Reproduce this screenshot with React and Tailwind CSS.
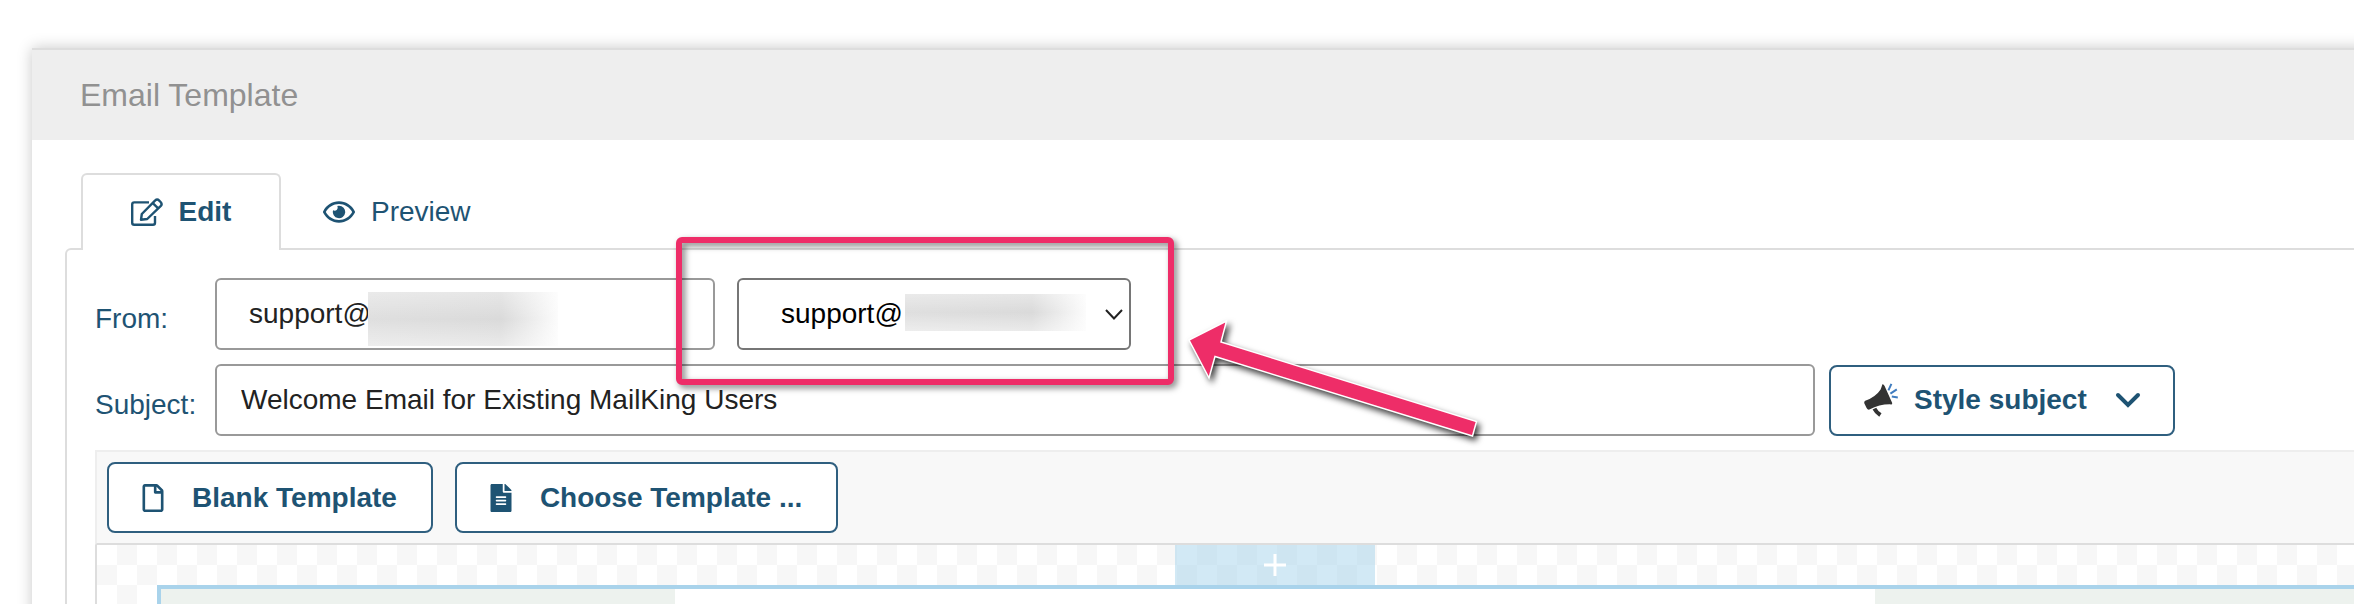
import React from 'react';
import { FaRegEye, FaRegFile, FaFileAlt } from 'react-icons/fa';

const outlineButton =
  'flex h-[71px] items-center rounded-lg border-2 border-[#2f5f7f] bg-white font-bold text-[#1e5373]';

function EditIcon() {
  return (
    <svg width="32" height="28" viewBox="0 0 32 28" fill="none" stroke="#1e5373" strokeWidth="2.4" strokeLinejoin="round">
      <path d="M18 4.4H3.2Q1.2 4.4 1.2 6.4V24.8Q1.2 26.8 3.2 26.8H22Q24 26.8 24 24.8V18" />
      <path d="M10 21.8L10.8 16L24 2.6Q26.2 .6 28.2 2.6L29.6 4Q31.6 6.2 29.6 8.2L16.2 21Z" />
      <path d="M21.8 5.2L27.2 10.4" />
    </svg>
  );
}

function BullhornIcon() {
  return (
    <svg width="34" height="34" viewBox="0 0 34 34">
      <path d="M18.4 1.2Q19.8 1 20.6 3L28 19.6Q28.6 21.2 27.2 21.4Q16 21 5.4 26.6Q3.6 27 2.6 25L.4 20.6Q-.2 18.8 1.2 17.8Q12 13.6 16.6 6.4Q17.8 3.4 18.4 1.2Z" fill="#333" />
      <path d="M10.4 25.6Q12 29 16.4 32" fill="none" stroke="#333" strokeWidth="4" />
      <path d="M24.4 7.4L27.4 .8M26.4 10.6L32.8 6.4M27.8 13.6L33.8 14.4" stroke="#3f7cbf" strokeWidth="2" />
    </svg>
  );
}

/** Tab strip above the editor panel */
function Tabs() {
  return (
    <div className="-mb-0.5 flex pl-4" role="tablist">
      <button
        role="tab"
        aria-selected="true"
        className="relative flex h-[77px] w-[200px] items-center justify-center gap-4 rounded-t-md border-2 border-b-0 border-[#ddd] bg-white pb-0.5 font-bold"
      >
        <EditIcon />
        Edit
      </button>
      <button role="tab" aria-selected="false" className="flex items-center gap-4 px-[42px]">
        <FaRegEye size={32} />
        Preview
      </button>
    </div>
  );
}

/** Soft grey patch that hides the domain part of an address */
function Redaction({ className }) {
  return (
    <div className={`absolute overflow-hidden bg-linear-to-r from-[#dfdfdf] via-[#dadada] via-70% to-[#fcfcfc] ${className}`}>
      <div className="h-full bg-linear-to-b from-white/35 via-white/0 to-white/45" />
    </div>
  );
}

function AddressForm() {
  return (
    <form className="flex flex-col gap-3.5 px-7 pt-7">
      <div className="flex items-center">
        <label htmlFor="from" className="w-[120px] pt-2.5">From:</label>
        <div className="relative">
          <input
            id="from"
            type="text"
            defaultValue="support@"
            className="h-[72px] w-[500px] rounded-md border-2 border-[#999] bg-white pr-4 pl-8 text-[#222]"
          />
          <Redaction className="top-3.5 left-[153px] h-[54px] w-[190px]" />
        </div>
        <div className="relative ml-[22px]">
          <select
            aria-label="Sender address"
            className="h-[72px] w-[394px] appearance-none rounded-md border-2 border-[#767676] bg-white pl-[42px] text-black"
          >
            <option>support@</option>
          </select>
          <Redaction className="top-4 left-[168px] h-[37px] w-[181px]" />
          <svg className="pointer-events-none absolute top-[31px] right-2" width="18" height="11" viewBox="0 0 18 11" fill="none">
            <path d="M1 1L9 9.5L17 1" stroke="#222" strokeWidth="2" />
          </svg>
        </div>
      </div>
      <div className="flex items-center">
        <label htmlFor="subject" className="w-[120px] pt-2.5">Subject:</label>
        <input
          id="subject"
          type="text"
          defaultValue="Welcome Email for Existing MailKing Users"
          className="h-[72px] w-[1600px] rounded-md border-2 border-[#999] bg-white px-6 text-[#222]"
        />
        <button type="button" className={`${outlineButton} ml-3.5 w-[346px] gap-4 pl-[33px]`}>
          <BullhornIcon />
          Style subject
          <svg className="ml-3" width="26" height="18" viewBox="0 0 26 18" fill="none">
            <path d="M3 4L13 14L23 4" stroke="#1e5373" strokeWidth="4" strokeLinecap="round" />
          </svg>
        </button>
      </div>
    </form>
  );
}

function TemplateToolbar() {
  return (
    <div className="flex gap-[22px] border-2 border-[#eee] border-b-[#ddd] bg-[#f8f8f8] p-2.5">
      <button className={`${outlineButton} gap-[25px] pr-[34px] pl-[30px]`}>
        <FaRegFile size={28} />
        Blank Template
      </button>
      <button className={`${outlineButton} gap-[25px] pr-[34px] pl-[30px]`}>
        <FaFileAlt size={28} />
        Choose Template ...
      </button>
    </div>
  );
}

/** Checkerboard canvas with the drop target and the template body */
function TemplateCanvas() {
  return (
    <div className="border-x-2 border-[#ddd] bg-[conic-gradient(#f7f7f7_25%,white_0_50%,#f7f7f7_0_75%,white_0)] bg-size-[40px_40px] px-[60px]">
      <button aria-label="Add block" className="mx-auto flex h-10 w-[200px] items-center justify-center bg-[#a5d3eb]/50">
        <svg width="24" height="24" viewBox="0 0 24 24" stroke="white" strokeWidth="3">
          <path d="M1 12H23M12 1V23" />
        </svg>
      </button>
      <div className="h-40 border-4 border-[#a9d3eb] bg-[#edf2ee]">
        <div className="mx-auto h-full w-[1200px] bg-white" />
      </div>
    </div>
  );
}

/** Frame and arrow drawn over the sender drop-down */
function Annotation() {
  return (
    <div className="pointer-events-none">
      <div className="absolute top-[237px] left-[676px] h-[148px] w-[498px] rounded-md border-6 border-[#ee2d68] drop-shadow-[3px_3px_3px_rgba(0,0,0,0.5)]" />
      <svg
        className="absolute top-[310px] left-[1180px] drop-shadow-[3px_4px_3px_rgba(0,0,0,0.75)]"
        width="310"
        height="140"
        viewBox="1180 310 310 140"
      >
        <path
          d="M1189 340L1226.500 321L1221 342L1476.500 421.500L1472.500 436L1215 356.500L1209 378Z"
          fill="#ee2d68"
          stroke="white"
          strokeWidth="1.5"
        />
      </svg>
    </div>
  );
}

export default function App() {
  return (
    <div className="relative h-screen overflow-hidden bg-white pt-12 pl-8 font-['Liberation_Sans',Arial,sans-serif] text-[28px] leading-8 text-[#1e5373]">
      <main className="-mr-[164px] bg-white shadow-[0_0_14px_rgba(0,0,0,0.22)]">
        <header className="border-t-2 border-[#ddd] bg-[#eee] px-12 py-[27px]">
          <h1 className="text-[32px] leading-9 text-[#919191]">Email Template</h1>
        </header>
        <div className="px-[33px] pt-[33px]">
          <Tabs />
          <section className="rounded-t-md border-2 border-[#ddd]">
            <AddressForm />
            <div className="px-7 pt-3.5">
              <TemplateToolbar />
              <TemplateCanvas />
            </div>
          </section>
        </div>
      </main>
      <Annotation />
    </div>
  );
}
